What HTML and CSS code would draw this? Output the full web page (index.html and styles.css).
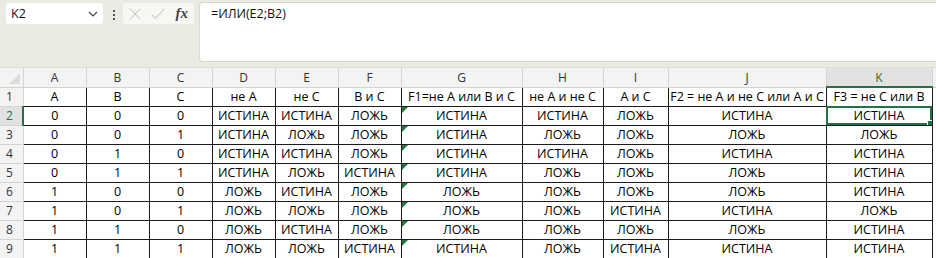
FILE: index.html
```html
<!DOCTYPE html>
<html lang="ru">

<head>
    <meta charset="UTF-8">
    <title>ИЛИ</title>
    <link rel="stylesheet" href="styles.css">
</head>

<body>
    <div class="toolbar">
        <div class="name-box">
            <span>K2</span>
            <svg class="chevron" width="10" height="6" viewBox="0 0 10 6"><path d="M1 1l4 4 4-4" fill="none" stroke="#444" stroke-width="1.2"/></svg>
        </div>
        <div class="dots"><i></i><i></i><i></i></div>
        <div class="fx-box">
            <svg width="14" height="14" viewBox="0 0 14 14"><path d="M1 1l12 12M13 1L1 13" stroke="#b9b9b9" stroke-width="1.1" fill="none"/></svg>
            <svg width="16" height="14" viewBox="0 0 16 14"><path d="M1 8l4 4L15 1" stroke="#b9b9b9" stroke-width="1.1" fill="none"/></svg>
            <span class="fx">fx</span>
        </div>
        <div class="formula">=ИЛИ(E2;B2)</div>
    </div>

    <table class="sheet">
        <colgroup>
            <col style="width:23px">
            <col style="width:63px">
            <col style="width:63px">
            <col style="width:63px">
            <col style="width:63px">
            <col style="width:63px">
            <col style="width:63px">
            <col style="width:121px">
            <col style="width:81px">
            <col style="width:65px">
            <col style="width:158px">
            <col style="width:106px">
            <col style="width:20px">
        </colgroup>
        <thead>
            <tr>
                <th class="corner"><span class="corner-tri"></span></th>
                <th>A</th><th>B</th><th>C</th><th>D</th><th>E</th><th>F</th><th>G</th><th>H</th><th>I</th><th>J</th>
                <th class="active-col">K</th>
                <th class="blank"></th>
            </tr>
        </thead>
        <tbody id="rows"></tbody>
    </table>

    <script>
        const rows = [
            ['A', 'B', 'C', 'не А', 'не С', 'В и С', 'F1=не А или В и С', 'не А и не С', 'А и С', 'F2 = не А и не С или А и С', 'F3 = не С или В'],
            ['0', '0', '0', 'ИСТИНА', 'ИСТИНА', 'ЛОЖЬ', 'ИСТИНА', 'ИСТИНА', 'ЛОЖЬ', 'ИСТИНА', 'ИСТИНА'],
            ['0', '0', '1', 'ИСТИНА', 'ЛОЖЬ', 'ЛОЖЬ', 'ИСТИНА', 'ЛОЖЬ', 'ЛОЖЬ', 'ЛОЖЬ', 'ЛОЖЬ'],
            ['0', '1', '0', 'ИСТИНА', 'ИСТИНА', 'ЛОЖЬ', 'ИСТИНА', 'ИСТИНА', 'ЛОЖЬ', 'ИСТИНА', 'ИСТИНА'],
            ['0', '1', '1', 'ИСТИНА', 'ЛОЖЬ', 'ИСТИНА', 'ИСТИНА', 'ЛОЖЬ', 'ЛОЖЬ', 'ЛОЖЬ', 'ИСТИНА'],
            ['1', '0', '0', 'ЛОЖЬ', 'ИСТИНА', 'ЛОЖЬ', 'ЛОЖЬ', 'ЛОЖЬ', 'ЛОЖЬ', 'ЛОЖЬ', 'ИСТИНА'],
            ['1', '0', '1', 'ЛОЖЬ', 'ЛОЖЬ', 'ЛОЖЬ', 'ЛОЖЬ', 'ЛОЖЬ', 'ИСТИНА', 'ИСТИНА', 'ЛОЖЬ'],
            ['1', '1', '0', 'ЛОЖЬ', 'ИСТИНА', 'ЛОЖЬ', 'ЛОЖЬ', 'ЛОЖЬ', 'ЛОЖЬ', 'ЛОЖЬ', 'ИСТИНА'],
            ['1', '1', '1', 'ЛОЖЬ', 'ЛОЖЬ', 'ИСТИНА', 'ИСТИНА', 'ЛОЖЬ', 'ИСТИНА', 'ИСТИНА', 'ИСТИНА']
        ];

        const body = document.getElementById('rows');
        rows.forEach((cells, i) => {
            const tr = document.createElement('tr');
            const head = document.createElement('th');
            head.className = 'row-head' + (i === 1 ? ' active-row' : '');
            head.textContent = i + 1;
            tr.appendChild(head);
            cells.forEach((text, c) => {
                const td = document.createElement('td');
                td.textContent = text;
                // green error marker on G (text stored as formula)
                if (c === 6 && i > 0) td.classList.add('flag');
                if (c === 10 && i === 1) td.classList.add('selected');
                tr.appendChild(td);
            });
            const tail = document.createElement('td');
            tail.className = 'tail';
            tr.appendChild(tail);
            body.appendChild(tr);
        });
    </script>
</body>

</html>
```

FILE: styles.css
```css
:root {
    --bar-bg: #eaece3;
    --head-bg: #f3f3f3;
    --head-line: #d4d4d4;
    --grid-line: #1c1c1c;
    --green: #217346;
}

* {
    box-sizing: border-box;
    margin: 0;
    padding: 0;
}

body {
    font-family: "Open Sans", "Liberation Sans", sans-serif;
    background-color: var(--bar-bg);
    width: 936px;
    height: 258px;
    overflow: hidden;
}

.toolbar {
    display: flex;
    align-items: flex-start;
    height: 68px;
    padding: 2px 0 0 6px;
    border-bottom: 1px solid #dcdcd6;
}

.name-box {
    display: flex;
    align-items: center;
    justify-content: space-between;
    width: 97px;
    height: 21px;
    margin-top: 1px;
    padding: 0 5px 0 5px;
    background-color: #fff;
    border-radius: 3px;
    font-size: 12.5px;
    color: #111;
}

.dots {
    display: flex;
    flex-direction: column;
    gap: 2px;
    margin: 8px 8px 0 10px;
}

.dots i {
    display: block;
    width: 2px;
    height: 2px;
    background-color: #555;
}

.fx-box {
    display: flex;
    align-items: center;
    gap: 10px;
    width: 71px;
    height: 21px;
    margin-top: 1px;
    padding: 0 6px 0 6px;
    background-color: #f7f7f4;
    border-radius: 3px;
}

.fx {
    font-family: "Liberation Serif", serif;
    font-style: italic;
    font-weight: bold;
    font-size: 15px;
    color: #444;
}

.formula {
    flex: 1;
    height: 60px;
    margin-left: 5px;
    padding: 2px 0 0 11px;
    background-color: #fff;
    border: 1px solid #d8d8d2;
    border-right: none;
    border-radius: 3px 0 0 3px;
    font-size: 12.5px;
    color: #111;
}

.sheet {
    table-layout: fixed;
    border-collapse: collapse;
    width: 952px;
    background-color: #fff;
    font-size: 12.5px;
    color: #000;
}

.sheet th,
.sheet td {
    height: 19px;
    padding: 0;
    text-align: center;
    white-space: nowrap;
    overflow: hidden;
    font-weight: normal;
    line-height: 17px;
}

.sheet thead th {
    background-color: var(--head-bg);
    border-right: 1px solid var(--head-line);
    border-bottom: 1px solid var(--head-line);
    color: #333;
    font-size: 12px;
}

.sheet thead th.active-col {
    background-color: #e2e2e2;
    color: var(--green);
    border-bottom: 2px solid var(--green);
}

.sheet thead th.blank {
    border-right: none;
}

.corner {
    position: relative;
}

.corner-tri {
    position: absolute;
    right: 3px;
    bottom: 3px;
    border-left: 11px solid transparent;
    border-bottom: 11px solid #dcdcdc;
}

.row-head {
    background-color: var(--head-bg);
    border-right: 1px solid var(--head-line);
    border-bottom: 1px solid var(--head-line);
    color: #333;
    font-size: 12px;
    text-align: left !important;
    padding-left: 6px !important;
}

.row-head.active-row {
    color: var(--green);
    background-color: #e2e2e2;
    border-right: 2px solid var(--green);
}

.sheet td {
    border: 1px solid var(--grid-line);
}

.sheet td.tail {
    border: none;
    border-left: 1px solid var(--grid-line);
}

.flag {
    position: relative;
}

.flag::before {
    content: "";
    position: absolute;
    top: 0;
    left: 0;
    border-top: 6px solid #1f7a3a;
    border-right: 6px solid transparent;
}

.selected {
    position: relative;
    outline: 2px solid var(--green);
    outline-offset: -2px;
}

.selected::after {
    content: "";
    position: absolute;
    right: -3px;
    bottom: -3px;
    width: 6px;
    height: 6px;
    background-color: var(--green);
    border: 1px solid #fff;
}
```
